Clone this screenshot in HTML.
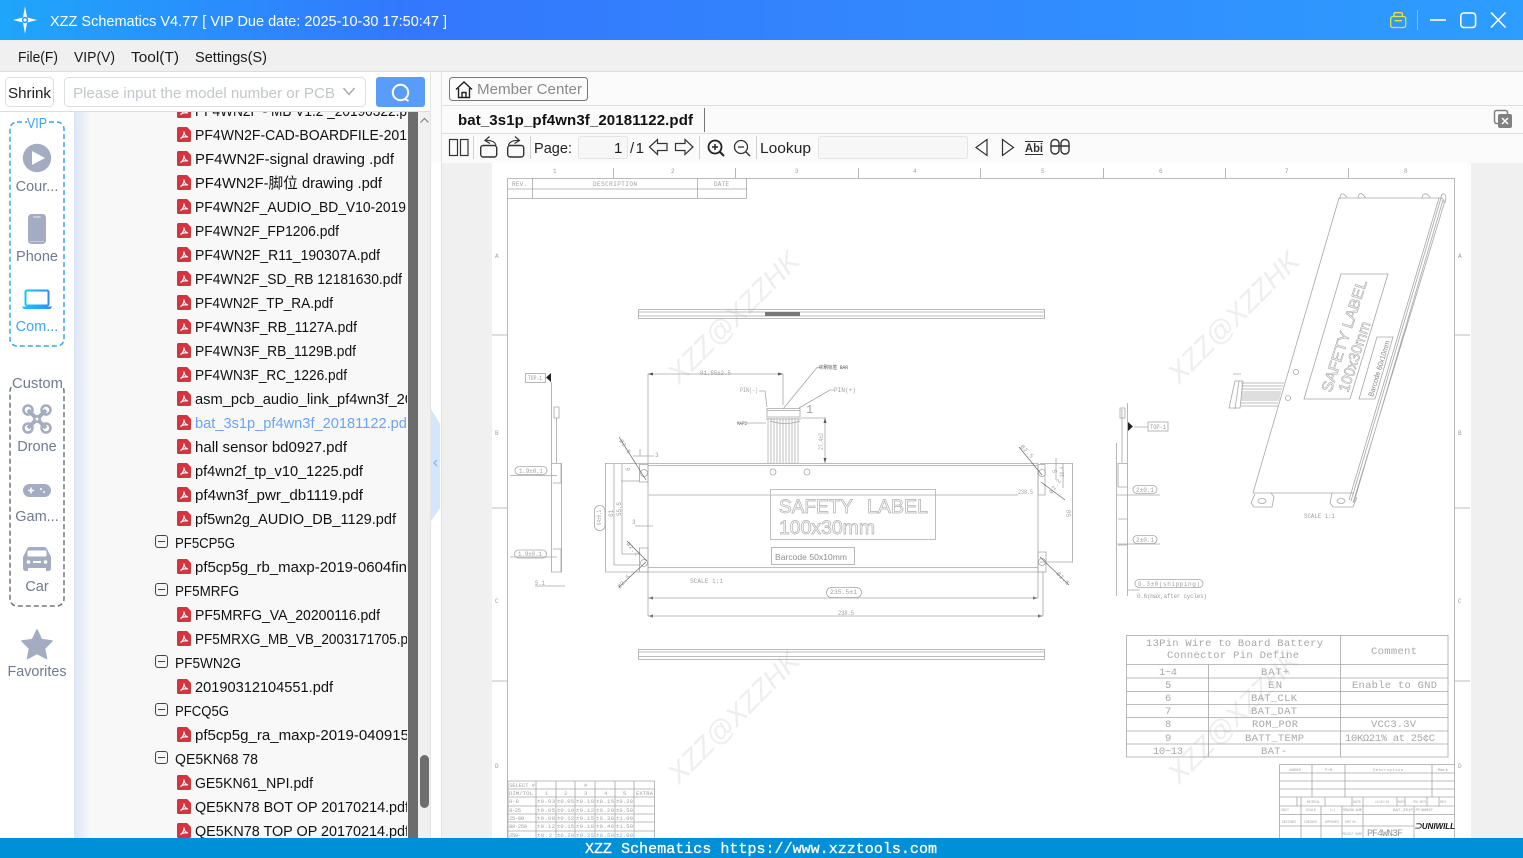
<!DOCTYPE html>
<html lang="en">
<head>
<meta charset="utf-8">
<title>XZZ Schematics</title>
<style>
html,body{margin:0;padding:0;width:1523px;height:858px;overflow:hidden;background:#fff}
svg{display:block}
text{font-family:"Liberation Sans","Noto Sans CJK SC",sans-serif;white-space:pre}
.f{font-size:15px;fill:#111;transform:translateY(1px)}
.s{font-size:14.5px;fill:#6f7b90;text-anchor:middle}
.m{font-size:14.5px;fill:#1a1a1a}
.t{font-size:15px;fill:#222}
text.d,.d text{font-family:"Liberation Mono",monospace}
text.e,.e text{font-family:"Liberation Mono",monospace}
.d{font-size:6px;fill:#a0a0a0}
.e{font-size:10.5px;fill:#a8a8a8}
.g{fill:none;stroke:#a6a6a6;stroke-width:.8}
.w{font-size:28px;font-style:italic;fill:#eeeeee}
</style>
</head>
<body>
<svg width="1523" height="858" viewBox="0 0 1523 858" xmlns="http://www.w3.org/2000/svg">
<defs>
<linearGradient id="tb" x1="0" x2="1" y1="0" y2="0">
<stop offset="0" stop-color="#1fa6fb"/><stop offset=".27" stop-color="#3377fd"/><stop offset=".55" stop-color="#3385fd"/><stop offset="1" stop-color="#2d9dff"/>
</linearGradient>
<linearGradient id="ls" x1="0" x2="1" y1="0" y2="0">
<stop offset="0" stop-color="#dce6f6"/><stop offset=".05" stop-color="#f8f8f8"/>
</linearGradient>
<linearGradient id="lap" x1="0" x2="1" y1="0" y2="0">
<stop offset="0" stop-color="#12c8fb"/><stop offset="1" stop-color="#2f8cf5"/>
</linearGradient>
<clipPath id="lc"><rect x="74" y="112" width="333" height="726"/></clipPath>
<clipPath id="pc"><rect x="492" y="163" width="979" height="675"/></clipPath>
<g id="p">
<path d="M0 1.5Q0 0 1.5 0H10L14 4V13.5Q14 15 12.5 15H1.5Q0 15 0 13.5Z" fill="#d5343f"/>
<path d="M3.5 11.5C6 10 7 7 7 4.5 7.2 7.5 8.5 9.5 11 10 8.5 9.5 5.5 10 3.5 11.5Z" fill="none" stroke="#fff" stroke-width="1.1"/>
</g>
<g id="b">
<rect x="0.5" y="0.5" width="12" height="12" rx="2.5" fill="none" stroke="#444"/>
<path d="M3 6.5H10" stroke="#444"/>
</g>
</defs>

<!-- base -->
<rect width="1523" height="858" fill="#fff"/>

<!-- title bar -->
<rect width="1523" height="40" fill="url(#tb)"/>
<path d="M25 6L27 17.5 37 20 27 22.5 25 34 23 22.5 13 20 23 17.5Z" fill="#fff"/>
<circle cx="25" cy="20" r="3.2" fill="#2a96fb"/><circle cx="25" cy="20" r="1.6" fill="#fff"/>
<circle cx="20" cy="20" r="1.2" fill="#fff"/><circle cx="30" cy="20" r="1.2" fill="#fff"/>
<text x="50" y="26" font-size="14.5" fill="#fff" textLength="397" lengthAdjust="spacingAndGlyphs">XZZ Schematics V4.77 [ VIP Due date: 2025-10-30 17:50:47 ]</text>
<g fill="none" stroke="#e3e63a" stroke-width="1.3">
<rect x="1390.7" y="16.5" width="15" height="11" rx="2"/><path d="M1394 16.5V14Q1394 12.7 1395.5 12.7H1401Q1402.3 12.7 1402.3 14V16.5M1394.5 20.7H1402"/>
</g>
<path d="M1417.5 10V30" stroke="#fff" stroke-opacity=".35"/>
<g fill="none" stroke="#fff" stroke-width="1.6">
<path d="M1430 20H1446"/><rect x="1460.8" y="13" width="14.8" height="14.5" rx="3"/><path d="M1491 12.5L1505.5 27.5M1505.5 12.5L1491 27.5"/>
</g>

<!-- menu -->
<rect y="40" width="1523" height="31" fill="#f0f0f0"/>
<rect y="71" width="1523" height="1" fill="#dcdcdc"/>
<text class="m" x="18" y="62" textLength="40" lengthAdjust="spacingAndGlyphs">File(F)</text>
<text class="m" x="74" y="62" textLength="41" lengthAdjust="spacingAndGlyphs">VIP(V)</text>
<text class="m" x="131" y="62" textLength="48" lengthAdjust="spacingAndGlyphs">Tool(T)</text>
<text class="m" x="195" y="62" textLength="72" lengthAdjust="spacingAndGlyphs">Settings(S)</text>

<!-- search row -->
<rect x="5.5" y="77.5" width="48" height="29" rx="4" fill="#fff" stroke="#dcdfe6"/>
<text x="8" y="98" font-size="15" fill="#222" textLength="43" lengthAdjust="spacingAndGlyphs">Shrink</text>
<rect x="64.5" y="77.5" width="301" height="29" rx="4" fill="#fff" stroke="#dcdfe6"/>
<text x="73" y="98" font-size="15" fill="#c3c6cc" textLength="262" lengthAdjust="spacingAndGlyphs">Please input the model number or PCB</text>
<path d="M343.5 88L349 94.5 354.500 88" fill="none" stroke="#a8abb2" stroke-width="1.5"/>
<rect x="376" y="77" width="49" height="30" rx="3" fill="#5a9cf9"/>
<circle cx="400.500" cy="92.500" r="7.700" fill="none" stroke="#fff" stroke-width="2"/>
<path d="M405 99L408.500 101" stroke="#fff" stroke-width="2"/>
<rect y="111" width="431" height="1" fill="#dcdcdc"/>

<!-- sidebar -->
<rect x="10" y="122" width="54" height="224" rx="7" fill="none" stroke="#3ea4fb" stroke-width="1.500" stroke-dasharray="5 3"/>
<rect x="27" y="115" width="20" height="14" fill="#fff"/>
<text x="37" y="128" font-size="14.500" fill="#3ea4fb" text-anchor="middle" textLength="20" lengthAdjust="spacingAndGlyphs">VIP</text>
<circle cx="37" cy="158" r="14.200" fill="#a3acc0"/>
<path d="M32 151L45 158 32 165Z" fill="#fff"/>
<text class="s" x="37" y="191">Cour...</text>
<rect x="28" y="214" width="18" height="30" rx="3.500" fill="#a3acc0"/>
<rect x="33" y="216" width="8" height="2" rx="1" fill="#c8cdd8"/><rect x="30" y="241" width="14" height="1" fill="#c8cdd8"/>
<text class="s" x="37" y="261">Phone</text>
<rect x="25.500" y="290.500" width="23" height="15" rx="1.500" fill="none" stroke="url(#lap)" stroke-width="2"/>
<path d="M22 306.500H52L50.500 309H23.500Z" fill="url(#lap)"/>
<text class="s" x="37" y="331" style="fill:#3ea4fb">Com...</text>

<rect x="10" y="384" width="54" height="222" rx="7" fill="none" stroke="#70757d" stroke-width="1.500" stroke-dasharray="5 3"/>
<rect x="12" y="375" width="50" height="14" fill="#fff"/>
<text x="37.500" y="388" font-size="14.500" fill="#6f7b90" text-anchor="middle" textLength="51" lengthAdjust="spacingAndGlyphs">Custom</text>
<g fill="none" stroke="#a3acc0">
<path d="M28 410L46 428M46 410L28 428" stroke-width="4"/>
<circle cx="28" cy="410" r="4.500" stroke-width="2.500"/><circle cx="46" cy="410" r="4.500" stroke-width="2.500"/>
<circle cx="28" cy="428" r="4.500" stroke-width="2.500"/><circle cx="46" cy="428" r="4.500" stroke-width="2.500"/>
</g>
<circle cx="37" cy="419" r="4" fill="#a3acc0"/><circle cx="37" cy="419" r="1.500" fill="#fff"/>
<text class="s" x="37" y="451">Drone</text>
<rect x="23" y="484" width="28" height="13" rx="6.500" fill="#a3acc0"/>
<path d="M28 490.500H34M31 487.500V493.500" stroke="#fff" stroke-width="1.500"/>
<circle cx="41" cy="489" r="1" fill="#fff"/><circle cx="44" cy="492" r="1" fill="#fff"/>
<text class="s" x="37" y="521">Gam...</text>
<path d="M23 557L27 549Q28 547 30 547H44Q46 547 47 549L51 557V568Q51 571 48 571H46V568H28V571H26Q23 571 23 568Z" fill="#a3acc0"/>
<rect x="27.500" y="550.500" width="19" height="6" rx="1" fill="#fff"/>
<circle cx="28.500" cy="562" r="1.800" fill="#fff"/><circle cx="45.500" cy="562" r="1.800" fill="#fff"/><rect x="33" y="561" width="8" height="2" fill="#fff"/>
<text class="s" x="37" y="591">Car</text>
<path d="M37 630L41.500 639.500 52 641 44.500 648.500 46.500 658.500 37 653.500 27.500 658.500 29.500 648.500 22 641 32.500 639.500Z" fill="#a3acc0" stroke="#a3acc0" stroke-width="1.500" stroke-linejoin="round"/>
<text class="s" x="37" y="676" textLength="59" lengthAdjust="spacingAndGlyphs">Favorites</text>

<!-- list panel -->
<rect x="74" y="112" width="334" height="726" fill="url(#ls)"/>
<rect x="408" y="112" width="10" height="726" fill="#6c6c6c"/>
<rect x="418" y="112" width="12" height="726" fill="#f0f0f0"/>
<path d="M420.500 122.500L424.500 118.500 428.500 122.500" fill="none" stroke="#777"/>
<rect x="420" y="755" width="9" height="53" rx="4.500" fill="#6e6e6e"/>
<rect x="430" y="72" width="1" height="766" fill="#e4e4e4"/>
<path d="M431 409L440 424V508L431 521Z" fill="#d3e6fb"/>
<path d="M437 460L434 463 437 466" fill="none" stroke="#7fb3ee" stroke-width="1.200"/>

<g clip-path="url(#lc)">
<use href="#p" x="177" y="103"/><text class="f" x="195" y="115" textLength="212" lengthAdjust="spacingAndGlyphs">PF4WN2F - MB V1.2 _20190322.p</text>
<use href="#p" x="177" y="127"/><text class="f" x="195" y="139" textLength="212" lengthAdjust="spacingAndGlyphs">PF4WN2F-CAD-BOARDFILE-201</text>
<use href="#p" x="177" y="151"/><text class="f" x="195" y="163" textLength="199" lengthAdjust="spacingAndGlyphs">PF4WN2F-signal drawing .pdf</text>
<use href="#p" x="177" y="175"/><text class="f" x="195" y="187" textLength="187" lengthAdjust="spacingAndGlyphs">PF4WN2F-脚位 drawing .pdf</text>
<use href="#p" x="177" y="199"/><text class="f" x="195" y="211" textLength="211" lengthAdjust="spacingAndGlyphs">PF4WN2F_AUDIO_BD_V10-2019</text>
<use href="#p" x="177" y="223"/><text class="f" x="195" y="235" textLength="144" lengthAdjust="spacingAndGlyphs">PF4WN2F_FP1206.pdf</text>
<use href="#p" x="177" y="247"/><text class="f" x="195" y="259" textLength="185" lengthAdjust="spacingAndGlyphs">PF4WN2F_R11_190307A.pdf</text>
<use href="#p" x="177" y="271"/><text class="f" x="195" y="283" textLength="207" lengthAdjust="spacingAndGlyphs">PF4WN2F_SD_RB 12181630.pdf</text>
<use href="#p" x="177" y="295"/><text class="f" x="195" y="307" textLength="138" lengthAdjust="spacingAndGlyphs">PF4WN2F_TP_RA.pdf</text>
<use href="#p" x="177" y="319"/><text class="f" x="195" y="331" textLength="162" lengthAdjust="spacingAndGlyphs">PF4WN3F_RB_1127A.pdf</text>
<use href="#p" x="177" y="343"/><text class="f" x="195" y="355" textLength="161" lengthAdjust="spacingAndGlyphs">PF4WN3F_RB_1129B.pdf</text>
<use href="#p" x="177" y="367"/><text class="f" x="195" y="379" textLength="152" lengthAdjust="spacingAndGlyphs">PF4WN3F_RC_1226.pdf</text>
<use href="#p" x="177" y="391"/><text class="f" x="195" y="403" textLength="218" lengthAdjust="spacingAndGlyphs">asm_pcb_audio_link_pf4wn3f_20</text>
<use href="#p" x="177" y="415"/><text class="f" x="195" y="427" textLength="216" lengthAdjust="spacingAndGlyphs" style="fill:#6aa2f8">bat_3s1p_pf4wn3f_20181122.pdf</text>
<use href="#p" x="177" y="439"/><text class="f" x="195" y="451" textLength="152" lengthAdjust="spacingAndGlyphs">hall sensor bd0927.pdf</text>
<use href="#p" x="177" y="463"/><text class="f" x="195" y="475" textLength="168" lengthAdjust="spacingAndGlyphs">pf4wn2f_tp_v10_1225.pdf</text>
<use href="#p" x="177" y="487"/><text class="f" x="195" y="499" textLength="168" lengthAdjust="spacingAndGlyphs">pf4wn3f_pwr_db1119.pdf</text>
<use href="#p" x="177" y="511"/><text class="f" x="195" y="523" textLength="201" lengthAdjust="spacingAndGlyphs">pf5wn2g_AUDIO_DB_1129.pdf</text>
<use href="#b" x="155" y="535"/><text class="f" x="175" y="547" textLength="60" lengthAdjust="spacingAndGlyphs">PF5CP5G</text>
<use href="#p" x="177" y="559"/><text class="f" x="195" y="571" textLength="212" lengthAdjust="spacingAndGlyphs">pf5cp5g_rb_maxp-2019-0604fin</text>
<use href="#b" x="155" y="583"/><text class="f" x="175" y="595" textLength="64" lengthAdjust="spacingAndGlyphs">PF5MRFG</text>
<use href="#p" x="177" y="607"/><text class="f" x="195" y="619" textLength="185" lengthAdjust="spacingAndGlyphs">PF5MRFG_VA_20200116.pdf</text>
<use href="#p" x="177" y="631"/><text class="f" x="195" y="643" textLength="213" lengthAdjust="spacingAndGlyphs">PF5MRXG_MB_VB_2003171705.p</text>
<use href="#b" x="155" y="655"/><text class="f" x="175" y="667" textLength="66" lengthAdjust="spacingAndGlyphs">PF5WN2G</text>
<use href="#p" x="177" y="679"/><text class="f" x="195" y="691" textLength="138" lengthAdjust="spacingAndGlyphs">20190312104551.pdf</text>
<use href="#b" x="155" y="703"/><text class="f" x="175" y="715" textLength="54" lengthAdjust="spacingAndGlyphs">PFCQ5G</text>
<use href="#p" x="177" y="727"/><text class="f" x="195" y="739" textLength="214" lengthAdjust="spacingAndGlyphs">pf5cp5g_ra_maxp-2019-040915</text>
<use href="#b" x="155" y="751"/><text class="f" x="175" y="763" textLength="83" lengthAdjust="spacingAndGlyphs">QE5KN68 78</text>
<use href="#p" x="177" y="775"/><text class="f" x="195" y="787" textLength="118" lengthAdjust="spacingAndGlyphs">GE5KN61_NPI.pdf</text>
<use href="#p" x="177" y="799"/><text class="f" x="195" y="811" textLength="214" lengthAdjust="spacingAndGlyphs">QE5KN78 BOT OP 20170214.pdf</text>
<use href="#p" x="177" y="823"/><text class="f" x="195" y="835" textLength="214" lengthAdjust="spacingAndGlyphs">QE5KN78 TOP OP 20170214.pdf</text>
</g>

<!-- right panel chrome -->
<rect x="431" y="72" width="1092" height="91" fill="#fbfbfb"/>
<rect x="441" y="72" width="1" height="766" fill="#e2e2e2"/>
<rect x="442" y="105" width="1081" height="1" fill="#dedede"/>
<rect x="442" y="133" width="1081" height="1" fill="#dedede"/>
<rect x="449.500" y="77.500" width="138" height="23" rx="3" fill="#fbfbfb" stroke="#777"/>
<path d="M456 89.500L464 82 472 89.500M458.500 88V97.500H469.500V88M462 97.500V92.500H466V97.500" fill="none" stroke="#222" stroke-width="1.400"/>
<text x="477" y="94" font-size="15" fill="#8a8a8a" textLength="105" lengthAdjust="spacingAndGlyphs">Member Center</text>
<text x="458" y="125" font-size="15" font-weight="bold" fill="#111" textLength="235">bat_3s1p_pf4wn3f_20181122.pdf</text>
<rect x="704" y="108" width="1" height="24" fill="#777"/>
<rect x="1494.500" y="110.500" width="13" height="13" rx="2" fill="none" stroke="#808080" stroke-width="1.500"/>
<rect x="1498" y="114" width="14" height="14" rx="2" fill="#808080"/>
<path d="M1502 118L1508 124M1508 118L1502 124" stroke="#fff" stroke-width="1.500"/>

<!-- toolbar -->
<g fill="none" stroke="#333" stroke-width="1.200">
<rect x="449.500" y="139.500" width="8" height="16"/>
<rect x="460.500" y="139.500" width="7.500" height="16"/>
<rect x="480.700" y="145.500" width="16" height="11.500" rx="2.500" stroke-width="1.400"/>
<path d="M496 145Q494 140 486 140.500M489.500 136.500L485 140.500 490 143.500"/>
<rect x="507.700" y="145.500" width="16" height="11.500" rx="2.500" stroke-width="1.400"/>
<path d="M508.500 145Q510.500 140 518.500 140.500M515 136.500L519.500 140.500 514.500 143.500"/>
<path d="M649.500 147L657.500 139.500V143.500H667V150.500H657.500V154.500Z"/>
<path d="M693 147L685 139.500V143.500H675.500V150.500H685V154.500Z"/>
<path d="M987 139.500L976 147.500 987 155.500Z"/>
<path d="M1002.500 139.500L1013.500 147.500 1002.500 155.500Z"/>
</g>
<g stroke="#d0d0d0"><path d="M473.500 136V159M530.500 136V159M699.500 136V159M756.500 136V159"/></g>
<text class="t" x="534" y="153" textLength="38" lengthAdjust="spacingAndGlyphs">Page:</text>
<rect x="578.500" y="136.500" width="49" height="22" rx="2" fill="#f7f7f7" stroke="#e4e4e4"/>
<text class="t" x="614" y="153">1</text>
<text class="t" x="630" y="153" textLength="14">/1</text>
<circle cx="715" cy="147" r="6.500" fill="none" stroke="#222" stroke-width="1.800"/>
<path d="M712 147H718M715 144V150" stroke="#222" stroke-width="1.500"/>
<path d="M720 152L724 156" stroke="#222" stroke-width="2"/>
<circle cx="741" cy="147" r="6.500" fill="none" stroke="#333" stroke-width="1.300"/>
<path d="M738 147H744" stroke="#333" stroke-width="1.300"/>
<path d="M746 152L750 156" stroke="#333" stroke-width="1.500"/>
<text class="t" x="760" y="153" textLength="51" lengthAdjust="spacingAndGlyphs">Lookup</text>
<rect x="818.500" y="136.500" width="149" height="22" rx="2" fill="#f7f7f7" stroke="#e4e4e4"/>
<text x="1025" y="152" font-size="12" font-weight="bold" fill="#333" textLength="18" lengthAdjust="spacingAndGlyphs">Abi</text>
<path d="M1025 141.500H1043M1025 154.500H1043" stroke="#333"/>
<g fill="none" stroke="#333" stroke-width="1.400">
<rect x="1051" y="139.500" width="8" height="14.500" rx="3.800"/><rect x="1061" y="139.500" width="8" height="14.500" rx="3.800"/>
<path d="M1051 146H1069"/>
</g>

<!-- pdf area -->
<rect x="442" y="163" width="1081" height="675" fill="#f0f0f0"/>
<rect x="492" y="163" width="979" height="675" fill="#fff"/>

<g clip-path="url(#pc)">
<!-- watermarks -->
<g>
<text class="w" transform="translate(679,385) rotate(-45)">XZZ@XZZHK</text>
<text class="w" transform="translate(1179,385) rotate(-45)">XZZ@XZZHK</text>
<text class="w" transform="translate(679,785) rotate(-45)">XZZ@XZZHK</text>
<text class="w" transform="translate(1179,785) rotate(-45)">XZZ@XZZHK</text>
</g>
<!-- frame -->
<path class="g" d="M507.500 178.500H1454.500V838M507.500 178.500V838M613.500 168V178M735.500 168V178M858.500 168V178M980.500 168V178M1103.500 168V178M1225.500 168V178M1348.500 168V178M1455 335H1470M1455 508H1470M1455 681H1470M492 335H507M492 508H507M492 681H507"/>
<g class="d">
<text x="553" y="173">1</text><text x="671" y="173">2</text><text x="795" y="173">3</text><text x="913" y="173">4</text><text x="1041" y="173">5</text><text x="1159" y="173">6</text><text x="1285" y="173">7</text><text x="1404" y="173">8</text>
<text x="495" y="258">A</text><text x="495" y="435">B</text><text x="495" y="603">C</text><text x="495" y="768">D</text>
<text x="1458" y="258">A</text><text x="1458" y="435">B</text><text x="1458" y="603">C</text><text x="1458" y="768">D</text>
</g>
<!-- rev table -->
<path class="g" d="M507.500 189H746.500M507.500 198.500H746.500M746.500 178.500V198.500M532.500 178.500V198.500M697.500 178.500V198.500"/>
<g class="d"><text x="512" y="186" textLength="15">REV.</text><text x="593" y="186" textLength="44">DESCRIPTION</text><text x="714" y="186" textLength="15">DATE</text></g>

<!-- top / bottom strips -->
<path class="g" d="M638.500 309.500H1044.500V318.500H638.500ZM638.500 312H1044.500M638.500 316H1044.500"/>
<rect x="765" y="312" width="35" height="4" fill="#777"/>
<path class="g" d="M638.500 649.500H1044.500V659.500H638.500ZM638.500 652H1044.500M638.500 656.500H1044.500"/>

<!-- main view -->
<path class="g" d="M648 463.500H1038M648 465.500H1038M648 567.500H1038M640 572H1046M648 463V572M1038 463V572"/>
<path d="M648 495H1018" stroke="#d4d4d4" stroke-width="1.500"/>
<path class="g" d="M639.500 464.500H648V482H639.500ZM639.500 548H648V572H639.500ZM1038 464.500H1045V495H1038ZM1038 552H1046V572H1038Z"/>
<circle class="g" cx="644" cy="473" r="3.500"/><circle class="g" cx="644" cy="563" r="3.500"/><circle class="g" cx="1042" cy="473" r="3.500"/><circle class="g" cx="1042" cy="562" r="3.500"/>
<circle class="g" cx="773" cy="472" r="3"/><circle class="g" cx="807" cy="472" r="3"/>
<rect class="g" x="770.500" y="489.500" width="165" height="50" style="stroke:#b0b0b0"/>
<text x="779" y="513" font-size="19" fill="#fff" stroke="#b0b0b0" stroke-width=".7" textLength="74" lengthAdjust="spacingAndGlyphs">SAFETY</text>
<text x="867" y="513" font-size="19" fill="#fff" stroke="#b0b0b0" stroke-width=".7" textLength="61" lengthAdjust="spacingAndGlyphs">LABEL</text>
<text x="779" y="534" font-size="19" fill="#fff" stroke="#b0b0b0" stroke-width=".7" textLength="96" lengthAdjust="spacingAndGlyphs">100x30mm</text>
<rect class="g" x="771.500" y="547.500" width="83" height="17"/>
<text x="775" y="560" font-size="8.500" fill="#8f8f8f" textLength="72" lengthAdjust="spacingAndGlyphs">Barcode 50x10mm</text>

<!-- connector -->
<path class="g" d="M648 374H783M648 374V463M783 374V405M767 408.500H800V417H767ZM767 410.500H800M766 419H801M770 421Q785 426 800 421"/>
<path d="M768 418V463M771 418V463M774 418V463M777 418V463M780 418V463M783 418V463M786 418V463M789 418V463M792 418V463M795 418V463M798 418V463" stroke="#b0b0b0" stroke-width=".8"/>
<path class="g" d="M783 409L817 367.500H822M799 408L830 390H834M767 407L765 391H759M766 423H747M801 418H826M825 418V463"/>
<path d="M648 374l5-1.500v3ZM783 374l-5-1.500v3ZM825 418l-1.500 5h3ZM825 463l-1.500-5h3ZM648 598l5-1.500v3ZM1038 598l-5-1.500v3ZM648 616l5-1.500v3ZM1043 616l-5-1.500v3Z" fill="#555"/>
<g class="d">
<text x="700" y="375" textLength="31" lengthAdjust="spacingAndGlyphs">81.55±2.5</text>
<text x="740" y="392" textLength="18" lengthAdjust="spacingAndGlyphs">PIN(-)</text>
<text x="834" y="392" textLength="22">PIN(+)</text>
<text x="819" y="369" textLength="29" lengthAdjust="spacingAndGlyphs" style="fill:#555;font-size:5px">印刷标签 BAR</text>
<text x="737" y="425" textLength="10" lengthAdjust="spacingAndGlyphs" style="fill:#555;font-size:5px">MAPD</text>
<text x="806" y="413" style="font-size:12px">1</text>
<text transform="translate(823,450) rotate(-90)" textLength="17" lengthAdjust="spacingAndGlyphs">27.4±2</text>
</g>

<!-- left dims -->
<path class="g" d="M605 463.500H648M605 572H640M605.500 463V572M614 464V565H640M622 464V554H640M621 481H640M633 456H654M640 449V456M635 526H653"/>
<rect class="g" x="594.500" y="505.500" width="10.500" height="25" rx="5"/>
<g class="d">
<text transform="translate(601,525) rotate(-90)" textLength="15" lengthAdjust="spacingAndGlyphs">64±0.1</text>
<text transform="translate(613,517) rotate(-90)">61</text>
<text transform="translate(621,516) rotate(-90)" textLength="14">55.5</text>
<text x="655" y="457">3</text><text x="632" y="524">3</text>
<text transform="translate(630,471) rotate(-90)">6</text>
<text x="1018" y="494" textLength="15" lengthAdjust="spacingAndGlyphs">238.5</text>
<text transform="translate(1071,517) rotate(-90)">50</text>
<text transform="translate(1057,473) rotate(-90)">5</text>
<text transform="translate(1064,477) rotate(-90)" textLength="10" lengthAdjust="spacingAndGlyphs">10.4</text>
<text transform="translate(619,441) rotate(55)" textLength="16">Ø2.5</text>
<text transform="translate(1020,447) rotate(45)" textLength="16">Ø2.5</text>
<text transform="translate(1052,494) rotate(-55)" textLength="16">Ø2.2</text>
<text transform="translate(626,544) rotate(50)" textLength="16">Ø2.2</text>
<text transform="translate(620,589) rotate(-50)" textLength="16">Ø2.5</text>
<text transform="translate(1056,574) rotate(45)" textLength="16">Ø2.5</text>
<text x="690" y="583" textLength="33" lengthAdjust="spacingAndGlyphs">SCALE 1:1</text>
<text x="830" y="594" textLength="27" lengthAdjust="spacingAndGlyphs">235.5±1</text>
<text x="838" y="615" textLength="16" lengthAdjust="spacingAndGlyphs">238.5</text>
</g>
<path d="M619 437L646 480M1019 447L1042 475M1041 482L1065 500M627 541L647 561M619 587L646 562M1040 557L1069 585" fill="none" stroke="#666" stroke-width=".7"/>
<path class="g" d="M1040 463.500H1073M1040 562H1073M1072.500 463V562M1056 458V480M1063 463V488M648 572V616M1038 572V598M1043 572V616M648 598H1038M648 616H1043"/>
<rect class="g" x="826.500" y="587.500" width="35" height="10" rx="5"/>

<!-- left side view -->
<path class="g" d="M551.500 463.500H561.500V572H551.500ZM553 483H561V463M553 549H561V572M551.500 382V463M556.500 418V463M554 407H559V418H554ZM510 475.500H557M510 557H557M535 586H565"/>
<rect class="g" x="525.500" y="373.500" width="20" height="9"/>
<path d="M551 373L546 377.500 551 382Z" fill="#222"/>
<rect class="g" x="515" y="466.500" width="32" height="8" rx="4"/>
<rect class="g" x="514.500" y="550" width="32" height="8" rx="4"/>
<g class="d"><text x="528" y="380" textLength="14" lengthAdjust="spacingAndGlyphs">TOP-1</text><text x="519" y="473" textLength="24" lengthAdjust="spacingAndGlyphs">1.9±0.1</text><text x="518" y="556" textLength="24" lengthAdjust="spacingAndGlyphs">1.9±0.1</text><text x="535" y="585" textLength="10" lengthAdjust="spacingAndGlyphs">5.1</text></g>

<!-- right side view -->
<path class="g" d="M1116.500 443V596M1127.500 403V596M1122 409V463M1118 463.500H1127.500V487H1118M1118 463V487M1118 519H1127.500V545H1118M1120 408H1125V418H1120ZM1134 427H1148M1117 495H1160M1117 544H1160M1128 590H1140"/>
<path d="M1128 422L1133 426.500 1128 431Z" fill="#222"/>
<rect class="g" x="1148" y="422" width="20" height="9"/>
<rect class="g" x="1133" y="485.500" width="24" height="8" rx="4"/>
<rect class="g" x="1133" y="535.500" width="24" height="8" rx="4"/>
<rect class="g" x="1135" y="579.500" width="68" height="8" rx="4"/>
<g class="d"><text x="1150" y="429" textLength="16" lengthAdjust="spacingAndGlyphs">TOP-1</text><text x="1136" y="492" textLength="18" lengthAdjust="spacingAndGlyphs">2±0.1</text><text x="1136" y="542" textLength="18" lengthAdjust="spacingAndGlyphs">2±0.1</text><text x="1138" y="586" textLength="62">0.3±0(shipping)</text><text x="1137" y="598" textLength="70">0.6(max,after cycles)</text></g>

<!-- isometric -->
<path class="g" d="M1339 198L1253 493M1339 198H1437Q1445 197 1444 204L1353 503M1253 493H1354M1439 198L1349 500M1441 198L1351 501M1443 200L1354 502"/>
<path class="g" d="M1340 199Q1340 193 1343 194T1347 198M1358 198Q1359 192 1362 194T1365 198M1422 198Q1423 193 1426 194T1430 198M1441 198Q1441 193 1444 194T1445 203M1255 494L1251 503 1254 507H1272L1274 497 1271 493M1332 493L1330 503 1333 507H1353L1357 497"/>
<ellipse class="g" cx="1262" cy="501" rx="4" ry="2.500"/><ellipse class="g" cx="1341" cy="501" rx="4" ry="2.500"/>
<path class="g" d="M1341 274H1388L1350 399H1304ZM1377 337H1393L1375 399H1359Z"/>
<text transform="translate(1331,393) rotate(-72)" font-size="15" fill="#fff" stroke="#a8a8a8" stroke-width=".6" textLength="117" lengthAdjust="spacingAndGlyphs">SAFETY LABEL</text>
<text transform="translate(1348,393) rotate(-72)" font-size="15" fill="#fff" stroke="#a8a8a8" stroke-width=".6" textLength="73" lengthAdjust="spacingAndGlyphs">100x30mm</text>
<text transform="translate(1373,397) rotate(-73)" font-size="7.500" fill="#888" textLength="58" lengthAdjust="spacingAndGlyphs">Barcode 60x10mm</text>
<circle class="g" cx="1296" cy="372" r="2.500"/><circle class="g" cx="1288" cy="398" r="2.500"/>
<path d="M1241 383H1284M1241 386H1283M1241 389H1282M1241 392H1281M1241 394H1281M1241 396H1280M1241 398H1280M1241 400H1279M1241 403H1278M1241 406H1278" stroke="#a6a6a6" stroke-width=".8"/>
<path class="g" d="M1235 381H1243L1240 408H1229ZM1239 381L1235 409M1233 374H1241"/>
<text class="d" x="1304" y="518" textLength="31" lengthAdjust="spacingAndGlyphs">SCALE 1:1</text>

<!-- pin table -->
<path class="g" d="M1126.500 635.500H1448V757H1126.500ZM1126.500 664.500H1448M1126.500 678H1448M1126.500 691.500H1448M1126.500 704.500H1448M1126.500 717.500H1448M1126.500 731H1448M1126.500 744H1448M1208.500 664.500V757M1340.500 635.500V757"/>
<g class="e">
<text x="1146" y="646" textLength="177">13Pin Wire to Board Battery</text>
<text x="1167" y="658" textLength="132">Connector Pin Define</text>
<text x="1371" y="654" textLength="46">Comment</text>
<text x="1159" y="675" textLength="18">1~4</text><text x="1261" y="675" textLength="28">BAT+</text>
<text x="1165" y="688">5</text><text x="1268" y="688" textLength="14">EN</text><text x="1352" y="688" textLength="85">Enable to GND</text>
<text x="1165" y="701">6</text><text x="1251" y="701" textLength="46">BAT_CLK</text>
<text x="1165" y="714">7</text><text x="1251" y="714" textLength="46">BAT_DAT</text>
<text x="1165" y="727">8</text><text x="1252" y="727" textLength="46">ROM_POR</text><text x="1371" y="727" textLength="45">VCC3.3V</text>
<text x="1165" y="741">9</text><text x="1245" y="741" textLength="59">BATT_TEMP</text><text x="1345" y="741" textLength="90">10KΩ21% at 25¢C</text>
<text x="1153" y="754" textLength="30">10~13</text><text x="1261" y="754" textLength="26">BAT-</text>
</g>

<!-- title block -->
<path class="g" d="M1279.500 764.500H1455M1279.500 764.500V838M1279.500 773H1455M1279.500 781H1455M1279.500 789H1455M1279.500 797H1455M1279.500 806H1455M1279.500 814.500H1455M1279.500 826H1414M1312 764.500V797M1345 764.500V797M1432 764.500V797M1301 797V838M1321 806V838M1342 806V838M1363 814.500V838M1414 806V838M1363 797V814M1297 797V806M1325 797V806M1352 797V806M1397 797V806M1405 797V806M1427 797V806M1439 797V806"/>
<g class="d" style="font-size:4px">
<text x="1289" y="771" textLength="12" lengthAdjust="spacingAndGlyphs">VANDER</text><text x="1325" y="771" textLength="7" lengthAdjust="spacingAndGlyphs">P/N</text><text x="1373" y="771" textLength="30">Description</text><text x="1438" y="771" textLength="10" lengthAdjust="spacingAndGlyphs">Mark</text>
<text x="1307" y="803" textLength="13" lengthAdjust="spacingAndGlyphs">MATERIAL</text><text x="1353" y="803" textLength="8" lengthAdjust="spacingAndGlyphs">DATE</text><text x="1375" y="803" textLength="14" lengthAdjust="spacingAndGlyphs">11/02/18</text><text x="1398" y="803" textLength="7" lengthAdjust="spacingAndGlyphs">SHEET</text><text x="1413" y="803" textLength="13" lengthAdjust="spacingAndGlyphs">TOTAL SHEETS</text><text x="1440" y="803" textLength="6" lengthAdjust="spacingAndGlyphs">REV</text>
<text x="1281" y="811" textLength="8" lengthAdjust="spacingAndGlyphs">UNIT</text><text x="1306" y="811" textLength="10" lengthAdjust="spacingAndGlyphs">SCALE</text><text x="1330" y="811" textLength="5" lengthAdjust="spacingAndGlyphs">1:1</text><text x="1343" y="811" textLength="19" lengthAdjust="spacingAndGlyphs">DRAWING NAME</text><text x="1393" y="811" textLength="40" lengthAdjust="spacingAndGlyphs">BAT_3S1P_PF4WN3F</text>
<text x="1282" y="823" textLength="14" lengthAdjust="spacingAndGlyphs">DESIGNED</text><text x="1304" y="823" textLength="13" lengthAdjust="spacingAndGlyphs">CHECKED</text><text x="1325" y="823" textLength="14" lengthAdjust="spacingAndGlyphs">APPROVED</text><text x="1345" y="823" textLength="12" lengthAdjust="spacingAndGlyphs">PART NO.</text>
<text x="1342" y="835" textLength="20" lengthAdjust="spacingAndGlyphs">PROJECT NAME</text>
</g>
<text x="1367" y="836" style="font-family:'Liberation Mono',monospace" font-size="10" fill="#999" textLength="36">PF4WN3F</text>
<text x="1414" y="829" font-size="8" font-weight="bold" font-style="italic" fill="#111" textLength="41" lengthAdjust="spacingAndGlyphs">⊃UNIWILL</text>

<!-- tolerance table -->
<path class="g" d="M508 781H654.500V838M508 781V838M508 789H654.500M508 797H654.500M508 806H654.500M508 814H654.500M508 822H654.500M508 831H654.500M536 781V838M556 781V838M575 781V838M595 781V838M615 781V838M634 781V838"/>
<g class="d" style="font-size:5.500px">
<text x="509" y="787" textLength="26" lengthAdjust="spacingAndGlyphs">SELECT #</text><text x="584" y="787">#</text>
<text x="509" y="795" textLength="24" lengthAdjust="spacingAndGlyphs">DIM/TOL</text><text x="545" y="795">1</text><text x="564" y="795">2</text><text x="584" y="795">3</text><text x="604" y="795">4</text><text x="623" y="795">5</text><text x="636" y="795" textLength="17">EXTRA</text>
<text x="509" y="803">0-8</text><text x="537" y="803" textLength="18">±0.03</text><text x="557" y="803" textLength="17">±0.05</text><text x="576" y="803" textLength="18">±0.10</text><text x="596" y="803" textLength="18">±0.15</text><text x="616" y="803" textLength="17">±0.20</text>
<text x="509" y="812" textLength="12">8-25</text><text x="537" y="812" textLength="18">±0.05</text><text x="557" y="812" textLength="17">±0.10</text><text x="576" y="812" textLength="18">±0.12</text><text x="596" y="812" textLength="18">±0.20</text><text x="616" y="812" textLength="17">±0.50</text>
<text x="509" y="820" textLength="15">25-80</text><text x="537" y="820" textLength="18">±0.08</text><text x="557" y="820" textLength="17">±0.12</text><text x="576" y="820" textLength="18">±0.15</text><text x="596" y="820" textLength="18">±0.30</text><text x="616" y="820" textLength="17">±1.00</text>
<text x="509" y="828" textLength="18">80-250</text><text x="537" y="828" textLength="18">±0.12</text><text x="557" y="828" textLength="17">±0.15</text><text x="576" y="828" textLength="18">±0.18</text><text x="596" y="828" textLength="18">±0.40</text><text x="616" y="828" textLength="17">±1.50</text>
<text x="509" y="837" textLength="12">250-</text><text x="537" y="837" textLength="15">±0.2</text><text x="557" y="837" textLength="17">±0.20</text><text x="576" y="837" textLength="18">±0.25</text><text x="596" y="837" textLength="18">±0.50</text><text x="616" y="837" textLength="17">±2.00</text>
</g>
</g>

<!-- status bar -->
<rect y="838" width="1523" height="20" fill="#0090d8"/>
<text x="585" y="853" font-size="15" fill="#fff" stroke="#fff" stroke-width=".3" style="font-family:'Liberation Mono',monospace" textLength="352">XZZ Schematics https://www.xzztools.com</text>
</svg>
</body>
</html>
